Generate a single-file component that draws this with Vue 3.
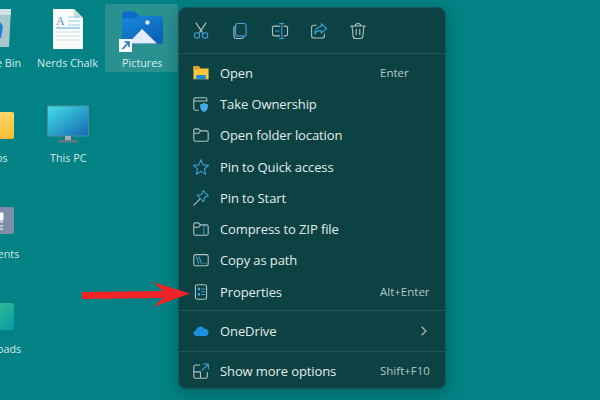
<script setup>
const grey = '#b4c4c4'
const blue = '#3fa3d8'
const tools = [
  { name: 'Cut', parts: [
    { d: 'M4.5 1 L11.5 11.5 M15.5 1 L8.5 11.5', s: grey },
    { d: 'M8.5 15a3 3 0 1 1-6 0a3 3 0 1 1 6 0z M17.5 15a3 3 0 1 1-6 0a3 3 0 1 1 6 0z M7.6 13 L8.5 11.5 M12.4 13 L11.5 11.5', s: blue }
  ] },
  { name: 'Copy', parts: [
    { d: 'M5 4.5 C3.8 5 3.2 6 3.2 7.2 V15 C3.2 17 4.8 18.4 6.6 18.4 H11.5 C12.6 18.4 13.6 17.8 14 16.8', s: grey },
    { d: 'M7.5 1.6 H14.5 C15.8 1.6 16.8 2.6 16.8 3.9 V13.4 C16.8 14.7 15.8 15.7 14.5 15.7 H7.5 C6.2 15.7 5.2 14.7 5.2 13.4 V3.9 C5.2 2.6 6.2 1.6 7.5 1.6z', s: blue }
  ] },
  { name: 'Rename', parts: [
    { d: 'M9.5 4.6 H3.6 C2.4 4.6 1.6 5.4 1.6 6.6 V13.4 C1.6 14.6 2.4 15.4 3.6 15.4 H9.5 M14.5 4.6 H16.4 C17.6 4.6 18.4 5.4 18.4 6.6 V13.4 C18.4 14.6 17.6 15.4 16.4 15.4 H14.5', s: grey },
    { d: 'M12 2.5 V17.5 M9.6 1.6 H14.4 M9.6 18.4 H14.4 M5 10 H9', s: blue }
  ] },
  { name: 'Share', parts: [
    { d: 'M7 3.6 H4 C2.7 3.6 1.8 4.6 1.8 5.8 V15.6 C1.8 16.9 2.7 17.8 4 17.8 H13.8 C15 17.8 16 16.9 16 15.6 V13.5', s: grey },
    { d: 'M12.5 1.8 L18.4 7.2 L12.5 12.4 V9.6 C9 9.4 6.6 10.6 5.2 13.4 C5.4 8.6 8 5.4 12.5 5 z', s: blue }
  ] },
  { name: 'Delete', parts: [
    { d: 'M1.6 4.4 H18.4 M7 4.2 C7 2.6 8.2 1.6 10 1.6 C11.8 1.6 13 2.6 13 4.2 M3.4 4.6 L4.6 16 C4.8 17.6 5.8 18.4 7.2 18.4 H12.8 C14.2 18.4 15.2 17.6 15.4 16 L16.6 4.6 M8 8 V14 M12 8 V14', s: grey }
  ] }
]
const items = [
  { label: 'Open', key: 'Enter', parts: [
    { d: 'M1.6 2.6 H7.4 L9.4 5 H18.4 V17 H1.6 z', f: '#fbc83e' },
    { d: 'M1.6 2.6 H7.4 L9.4 5 L7.4 6.4 H1.6 z', f: '#e6a020' },
    { d: 'M4.6 12.2 H15.4 V17 H4.6 z', f: '#1d8bd8' }
  ] },
  { label: 'Take Ownership', parts: [
    { d: 'M13 3 H4 C2.7 3 2 3.8 2 5 V15 C2 16.2 2.7 17 4 17 H7 M2 6.6 H16.6 V5 C16.6 3.8 15.8 3 14.6 3 H12', s: grey },
    { d: 'M13.4 8.6 C14.6 9.7 15.8 10 17.6 10 V13.6 C17.6 16.2 15.8 17.8 13.4 18.8 C11 17.8 9.2 16.2 9.2 13.6 V10 C11 10 12.2 9.7 13.4 8.6z', f: '#43a7e8' }
  ] },
  { label: 'Open folder location', parts: [
    { d: 'M2 15 V5 C2 3.9 2.8 3.2 3.8 3.2 H7.2 L9.4 5.4 H16 C17.2 5.4 18 6.2 18 7.4 V15 C18 16.2 17.2 17 16 17 H4 C2.8 17 2 16.2 2 15z M2 8 H7.4 L9.4 5.6', s: grey }
  ] },
  { label: 'Pin to Quick access', parts: [
    { d: 'M10 2 L12.4 7.6 L18.4 8.2 L13.8 12.1 L15.2 18 L10 14.9 L4.8 18 L6.2 12.1 L1.6 8.2 L7.6 7.6 z', s: blue }
  ] },
  { label: 'Pin to Start', parts: [
    { d: 'M12.4 1.8 L18.2 7.6 L13.8 9.4 L13 14.2 L5.8 7 L10.6 6.2 z', s: blue },
    { d: 'M8.6 11.4 L2 18', s: grey }
  ] },
  { label: 'Compress to ZIP file', parts: [
    { d: 'M2 15 V5 C2 3.9 2.8 3.2 3.8 3.2 H7.2 L9.4 5.4 H16 C17.2 5.4 18 6.2 18 7.4 V15 C18 16.2 17.2 17 16 17 H4 C2.8 17 2 16.2 2 15z M2 8 H7.4 L9.4 5.6', s: grey },
    { d: 'M13.2 5.6 V7.4 M13.2 8.8 V10.6 M13.2 12 V15.6', s: blue }
  ] },
  { label: 'Copy as path', parts: [
    { d: 'M4 4 H16 C17.2 4 18 4.8 18 6 V14.4 C18 15.6 17.2 16.4 16 16.4 H4 C2.8 16.4 2 15.6 2 14.4 V6 C2 4.8 2.8 4 4 4z', s: grey },
    { d: 'M5 6.8 L7.4 13.6 M8 6.8 L10.4 13.6 M12.4 13.6 H13 M15 13.6 H15.6', s: blue }
  ] },
  { label: 'Properties', key: 'Alt+Enter', parts: [
    { d: 'M6 2 H14 C15.4 2 16.2 2.8 16.2 4.2 V15.8 C16.2 17.2 15.4 18 14 18 H6 C4.6 18 3.8 17.2 3.8 15.8 V4.2 C3.8 2.8 4.6 2 6 2z', s: grey },
    { d: 'M6.4 5.4 H9 V8 H6.4 z M6.4 11.4 H9 V14 H6.4 z', f: '#43a7e8' },
    { d: 'M10.8 6.6 H14 M10.8 9.8 H14 M10.8 12.8 H14', s: blue }
  ] }
]
const cloud = [
  { d: 'M5 15.5 C3 15.5 1.6 14.2 1.6 12.6 C1.6 11 2.8 9.9 4.2 9.7 C4.8 7 6.8 5 9.4 5 C11.2 5 12.6 5.9 13.6 7.4 C16.4 7.4 18.4 9.2 18.4 11.6 C18.4 13.9 16.8 15.5 14.8 15.5 z', f: '#1f8fe0' }
]
const more = [
  { d: 'M8.6 3.4 H4 C2.8 3.4 2 4.2 2 5.4 V16 C2 17.2 2.8 18 4 18 H15 C16.2 18 17 17.2 17 16 V11.6 M2 11 H9.4 V18', s: grey },
  { d: 'M11.4 9 L18 2.4 M13 2.2 H18.2 V7.4', s: blue }
]
const desktop = [
  { label: 'e Bin', x: -4, y: 55 },
  { label: 'Nerds Chalk', x: 37, y: 55 },
  { label: 'Pictures', x: 122, y: 55 },
  { label: 'os', x: -4, y: 150 },
  { label: 'This PC', x: 50, y: 150 },
  { label: 'nents', x: -9, y: 246 },
  { label: 'oads', x: -3, y: 341 }
]
</script>

<template>
  <div class="desk">
    <div class="tile"></div>

    <svg class="art" width="600" height="400" viewBox="0 0 600 400">
      <defs>
        <linearGradient id="pc" x1="0" y1="0" x2="1" y2="1">
          <stop offset="0" stop-color="#43e0e6" /><stop offset="1" stop-color="#1468b4" />
        </linearGradient>
        <linearGradient id="fold" x1="0" y1="0" x2="0.6" y2="1">
          <stop offset="0" stop-color="#1a8fe0" /><stop offset="1" stop-color="#0a62b8" />
        </linearGradient>
        <linearGradient id="yel" x1="0" y1="0" x2="0" y2="1">
          <stop offset="0" stop-color="#ffd768" /><stop offset="1" stop-color="#f7bd35" />
        </linearGradient>
        <linearGradient id="grn" x1="0" y1="0" x2="1" y2="1">
          <stop offset="0" stop-color="#3cc48c" /><stop offset="1" stop-color="#049aa8" />
        </linearGradient>
      </defs>

      <!-- recycle bin -->
      <path d="M0 9 H11 L9 47 H0z" fill="#a9c6cc" />
      <path d="M0 9 H11 L10.5 15 H0z" fill="#cfe2e4" />
      <path d="M0 22 L3 26 L1 38 H0z" fill="#1f7fd6" />
      <!-- document -->
      <path d="M53 9 H74 L83 18 V49 H53z" fill="#fafcfc" />
      <path d="M74 9 L83 18 H74z" fill="#cfd8da" />
      <path d="M68 17 H80 M68 21 H80 M68 25 H80" stroke="#8fd2ee" stroke-width="1" />
      <path d="M56 28 H80" stroke="#50a8d8" stroke-width="1" />
      <path d="M56 32 H80 M56 36 H80 M56 40 H80" stroke="#d6dde0" stroke-width="1" />
      <text x="56" y="25" class="doc-a">A</text>
      <!-- pictures folder -->
      <path d="M122 14 C122 12.5 123 11.5 124.5 11.5 H134 L140 16 H160 C162 16 163 17 163 19 V41 C163 43 162 44 160 44 H124.5 C123 44 122 43 122 41z" fill="url(#fold)" />
      <path d="M122 14 C122 12.5 123 11.5 124.5 11.5 H134 L139.5 16 L133 18.5 H122z" fill="#0a6cc8" />
      <path d="M128 43.5 L142 29 L157 43.5z" fill="#e4ecfb" />
      <circle cx="147.5" cy="22.5" r="2.2" fill="#d8eafc" />
      <rect x="119" y="39" width="13" height="13" fill="#f7fbff" />
      <path d="M122.5 49 L128.5 42.5 M124.5 42 H129 V47" fill="none" stroke="#1878d0" stroke-width="1.6" />
      <!-- yellow folder -->
      <rect x="-12" y="112" width="26" height="27" rx="2" fill="url(#yel)" />
      <!-- this pc -->
      <rect x="47.5" y="106" width="41" height="30" fill="url(#pc)" stroke="#4f8f9c" stroke-width="1" />
      <rect x="65" y="136" width="6" height="4" fill="#a4aeb4" />
      <rect x="58" y="140" width="20" height="2.5" rx="1" fill="#64777c" />
      <!-- documents -->
      <rect x="-12" y="207" width="26" height="27" rx="2" fill="#7e8da9" />
      <path d="M0 213 H3 V220 H0z M0 222 H3 M0 226 H3 M0 229 H3" fill="#fff" stroke="#fff" stroke-width="1" />
      <!-- downloads -->
      <rect x="-12" y="303" width="26" height="27" rx="2" fill="url(#grn)" />
    </svg>

    <span v-for="d in desktop" :key="d.label" class="dlabel" :style="{ left: d.x + 'px', top: d.y + 'px' }">{{ d.label }}</span>

    <section class="menu">
      <div class="tools">
        <svg v-for="t in tools" :key="t.name" class="ic" width="18" height="18" viewBox="0 0 20 20" :aria-label="t.name">
          <path v-for="(p, i) in t.parts" :key="i" :d="p.d" :stroke="p.s || 'none'" :fill="p.f || 'none'" stroke-width="1.2" stroke-linecap="round" stroke-linejoin="round" />
        </svg>
      </div>
      <div class="group main">
        <div v-for="it in items" :key="it.label" class="row">
          <svg class="ic" width="18" height="18" viewBox="0 0 20 20">
            <path v-for="(p, i) in it.parts" :key="i" :d="p.d" :stroke="p.s || 'none'" :fill="p.f || 'none'" stroke-width="1.2" stroke-linecap="round" stroke-linejoin="round" />
          </svg>
          <span class="lbl">{{ it.label }}</span>
          <span v-if="it.key" class="key">{{ it.key }}</span>
        </div>
      </div>
      <div class="group single">
        <div class="row">
          <svg class="ic" width="18" height="18" viewBox="0 0 20 20">
            <path v-for="(p, i) in cloud" :key="i" :d="p.d" :fill="p.f" />
          </svg>
          <span class="lbl">OneDrive</span>
          <svg class="chev" width="8" height="10" viewBox="0 0 8 10"><path d="M1.6 0.8 L6 5 L1.6 9.2" fill="none" stroke="#a9bcbc" stroke-width="1.2" /></svg>
        </div>
      </div>
      <div class="group single last">
        <div class="row">
          <svg class="ic" width="18" height="18" viewBox="0 0 20 20">
            <path v-for="(p, i) in more" :key="i" :d="p.d" :stroke="p.s" fill="none" stroke-width="1.2" stroke-linecap="round" stroke-linejoin="round" />
          </svg>
          <span class="lbl">Show more options</span>
          <span class="key">Shift+F10</span>
        </div>
      </div>
    </section>

    <svg class="arrow" width="112" height="30" viewBox="0 0 112 30">
      <path d="M1 13 L82 12 L72 3 L109 14.5 L72 28 L82 19 L1 20 z" fill="#f02426" />
    </svg>
  </div>
</template>

<style>
html, body { margin: 0; background: #028284; }
</style>

<style scoped>
.desk {
  position: relative;
  width: 600px;
  height: 400px;
  overflow: hidden;
  background: #028284;
  font-family: "Open Sans", "Noto Sans", sans-serif;
}
.tile {
  position: absolute;
  left: 105px;
  top: 4px;
  width: 73px;
  height: 68px;
  background: #2a9191;
  border-radius: 2px;
}
.art { position: absolute; left: 0; top: 0; }
.doc-a { font: 12px "Liberation Serif", serif; fill: #3f8fc8; }
.dlabel {
  position: absolute;
  font-size: 10.8px;
  line-height: 16px;
  color: #d6eceb;
  white-space: nowrap;
}
.menu {
  position: absolute;
  left: 178px;
  top: 7px;
  width: 268px;
  height: 382px;
  box-sizing: border-box;
  display: flex;
  flex-direction: column;
  background: #0d4244;
  border: 1px solid #1c5557;
  border-radius: 8px;
  box-shadow: 0 4px 16px rgba(0, 50, 55, 0.4);
  color: #e2ecea;
}
.tools {
  height: 45px;
  flex: none;
  box-sizing: border-box;
  padding: 0 0 0 13px;
  display: flex;
  align-items: center;
  gap: 21.3px;
}
.group { border-top: 1px solid #1f5759; flex: none; }
.main { height: 257px; padding-top: 3px; box-sizing: border-box; }
.single { height: 40px; display: flex; align-items: center; }
.last .row { position: relative; top: -1px; }
.single .row { width: 100%; }
.row {
  height: 31.3px;
  display: flex;
  align-items: center;
  padding: 0 15px 0 13px;
}
.ic { flex: none; }
.lbl {
  margin-left: 10px;
  flex: 1;
  font-size: 13px;
  letter-spacing: -0.1px;
  white-space: nowrap;
}
.key {
  width: 50px;
  font-size: 11.5px;
  color: #b5c8c6;
  white-space: nowrap;
}
.chev { margin-right: 2px; }
.arrow { position: absolute; left: 81px; top: 279px; }
</style>
